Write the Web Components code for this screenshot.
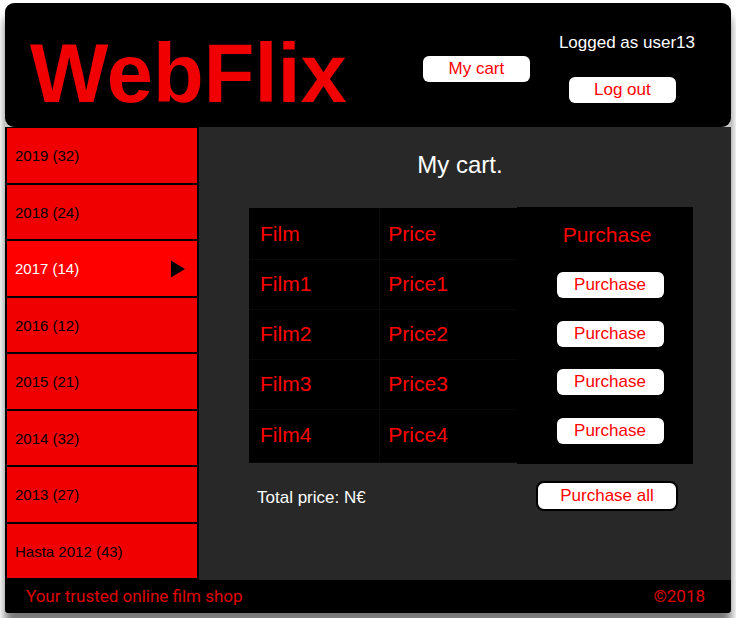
<!DOCTYPE html>
<html lang="en">
<head>
<meta charset="utf-8">
<meta name="viewport" content="width=device-width, initial-scale=1">
<title>WebFlix</title>
<style>
html { height: 100%; }
body {
  margin: 0;
  min-height: 100%;
  box-sizing: border-box;
  padding: 3px 5px 5px;
  display: flex;
  background: #fff;
  font-family: "Liberation Sans", Arial, sans-serif;
  font-size: 17px;
  --red: #f00000;
  --bright: #ff0000;
  --panel: #282828;
}
</style>
</head>
<body>
<webflix-app></webflix-app>
<script>
function define(name, html, setup) {
  const template = document.createElement('template');
  template.innerHTML = html;
  customElements.define(name, class extends HTMLElement {
    constructor() {
      super();
      this.attachShadow({ mode: 'open' }).append(template.content.cloneNode(true));
    }
    connectedCallback() {
      if (setup) setup(this, this.shadowRoot);
    }
  });
}

define('pill-button', `
<style>
:host { display: block; }
button {
  display: block; box-sizing: border-box; width: 100%; height: 26px; margin: 0; padding: 0;
  border: 0; border-radius: 6px; background: #fff; color: var(--bright);
  font: inherit; font-size: 17px; line-height: 24px; cursor: pointer;
}
:host([outlined]) button { height: 30px; border: 2px solid #000; border-radius: 8px; }
</style>
<button type="button"><slot></slot></button>`);

define('site-header', `
<style>
:host {
  display: flex; justify-content: space-between; align-items: center; box-sizing: border-box;
  min-height: 124px; padding: 18px 36px 0 25px; border-radius: 9px; background: #000;
}
h1 { margin: 0; color: var(--red); font-size: 83px; line-height: 94px; font-weight: bold; }
.actions { display: flex; align-items: center; gap: 29px; padding-bottom: 10px; }
.user { display: flex; flex-direction: column; align-items: flex-start; gap: 24px; padding-bottom: 2px; }
.user pill-button { margin-left: 10px; }
p { margin: 0; color: #fff; line-height: 20px; }
pill-button { width: 107px; }
</style>
<h1>WebFlix</h1>
<div class="actions">
  <pill-button>My cart</pill-button>
  <div class="user"><p>Logged as user13</p><pill-button>Log out</pill-button></div>
</div>`);

define('year-item', `
<style>
:host { display: flex; flex: 1; background: var(--red); color: #000; }
:host([current]) { background: var(--bright); color: #fff; }
a {
  flex: 1; display: flex; align-items: center; justify-content: space-between;
  padding: 2px 12px 0 8px; color: inherit; text-decoration: none; font-size: 15px; line-height: 18px;
}
svg { display: none; }
:host([current]) svg { display: block; }
</style>
<a href="#"><span><slot></slot></span>
<svg width="14" height="18" viewBox="0 0 14 18" aria-hidden="true"><path d="M0 0.500L14 9L0 17.500Z" fill="#000"/></svg></a>`);

define('year-menu', `
<style>
:host { display: block; width: 194px; flex: none; background: #000; }
nav { display: flex; flex-direction: column; gap: 2px; height: 100%; box-sizing: border-box; padding: 1px 2px 2px; }
</style>
<nav aria-label="Years"><slot></slot></nav>`);

define('cart-table', `
<style>
:host { display: flex; align-items: center; color: var(--bright); font-size: 21px; }
table { border-collapse: separate; border-spacing: 0; background: #000; table-layout: fixed; }
th, td { font-weight: normal; box-sizing: border-box; padding: 0; line-height: 24px; }
.films { flex: 268; width: 0; }
.films th { height: 52px; }
.films td { height: 50px; padding-bottom: 2px; }
.films tr:last-child td { height: 53px; }
.films th, .films td { text-align: left; padding-left: 11px; border-bottom: 1px solid #090909; }
.films tr > :first-child { width: 49%; border-right: 1px solid #090909; }
.films tr > :last-child { padding-left: 8px; }
.buy { flex: 176; width: 0; height: 257px; }
.buy th { height: 54px; padding: 2px 0 0 4px; }
.buy td { height: 48px; padding-left: 10px; }
.buy tbody::after { content: ""; display: table-row; height: 9px; }
pill-button { width: 107px; margin: 0 auto; }
</style>
<table class="films"><thead><tr><th scope="col">Film</th><th scope="col">Price</th></tr></thead><tbody></tbody></table>
<table class="buy"><thead><tr><th scope="col">Purchase</th></tr></thead><tbody></tbody></table>`,
(host, root) => {
  const [films, buy] = root.querySelectorAll('tbody');
  for (let i = 1; i <= Number(host.getAttribute('count')); i++) {
    films.insertAdjacentHTML('beforeend', `<tr><td>Film${i}</td><td>Price${i}</td></tr>`);
    buy.insertAdjacentHTML('beforeend', '<tr><td><pill-button>Purchase</pill-button></td></tr>');
  }
});

define('cart-view', `
<style>
:host { display: block; flex: 1; background: var(--panel); color: #fff; padding: 24px 38px 24px 50px; }
h2 { margin: 0 0 28px; padding-right: 22px; text-align: center; font-size: 24px; line-height: 28px; font-weight: normal; }
.total { display: flex; align-items: center; justify-content: space-between; padding: 17px 15px 0 8px; }
p { margin: 0; padding-top: 4px; line-height: 20px; }
pill-button { width: 142px; }
</style>
<h2>My cart.</h2>
<cart-table count="4"></cart-table>
<div class="total"><p>Total price: N€</p><pill-button outlined>Purchase all</pill-button></div>`);

define('site-footer', `
<style>
:host {
  display: flex; justify-content: space-between; align-items: center; min-height: 33px; box-sizing: border-box;
  padding: 0 26px 2px 21px; border-radius: 0 0 3px 3px; background: #000; color: #e00000;
  font-family: Roboto, sans-serif; font-size: 17px; line-height: 20px;
}
</style>
<span>Your trusted online film shop</span><span>©2018</span>`);

define('webflix-app', `
<style>
:host {
  flex: 1; display: flex; flex-direction: column; border-radius: 9px 9px 3px 3px;
  background: linear-gradient(transparent 60px, #c8c8c8 60px);
  box-shadow: 0 12px 10px rgba(0,0,0,.53);
}
main { flex: 1; display: flex; }
</style>
<site-header></site-header>
<main>
  <year-menu>
    <year-item>2019 (32)</year-item>
    <year-item>2018 (24)</year-item>
    <year-item current>2017 (14)</year-item>
    <year-item>2016 (12)</year-item>
    <year-item>2015 (21)</year-item>
    <year-item>2014 (32)</year-item>
    <year-item>2013 (27)</year-item>
    <year-item>Hasta 2012 (43)</year-item>
  </year-menu>
  <cart-view></cart-view>
</main>
<site-footer></site-footer>`);
</script>
</body>
</html>
